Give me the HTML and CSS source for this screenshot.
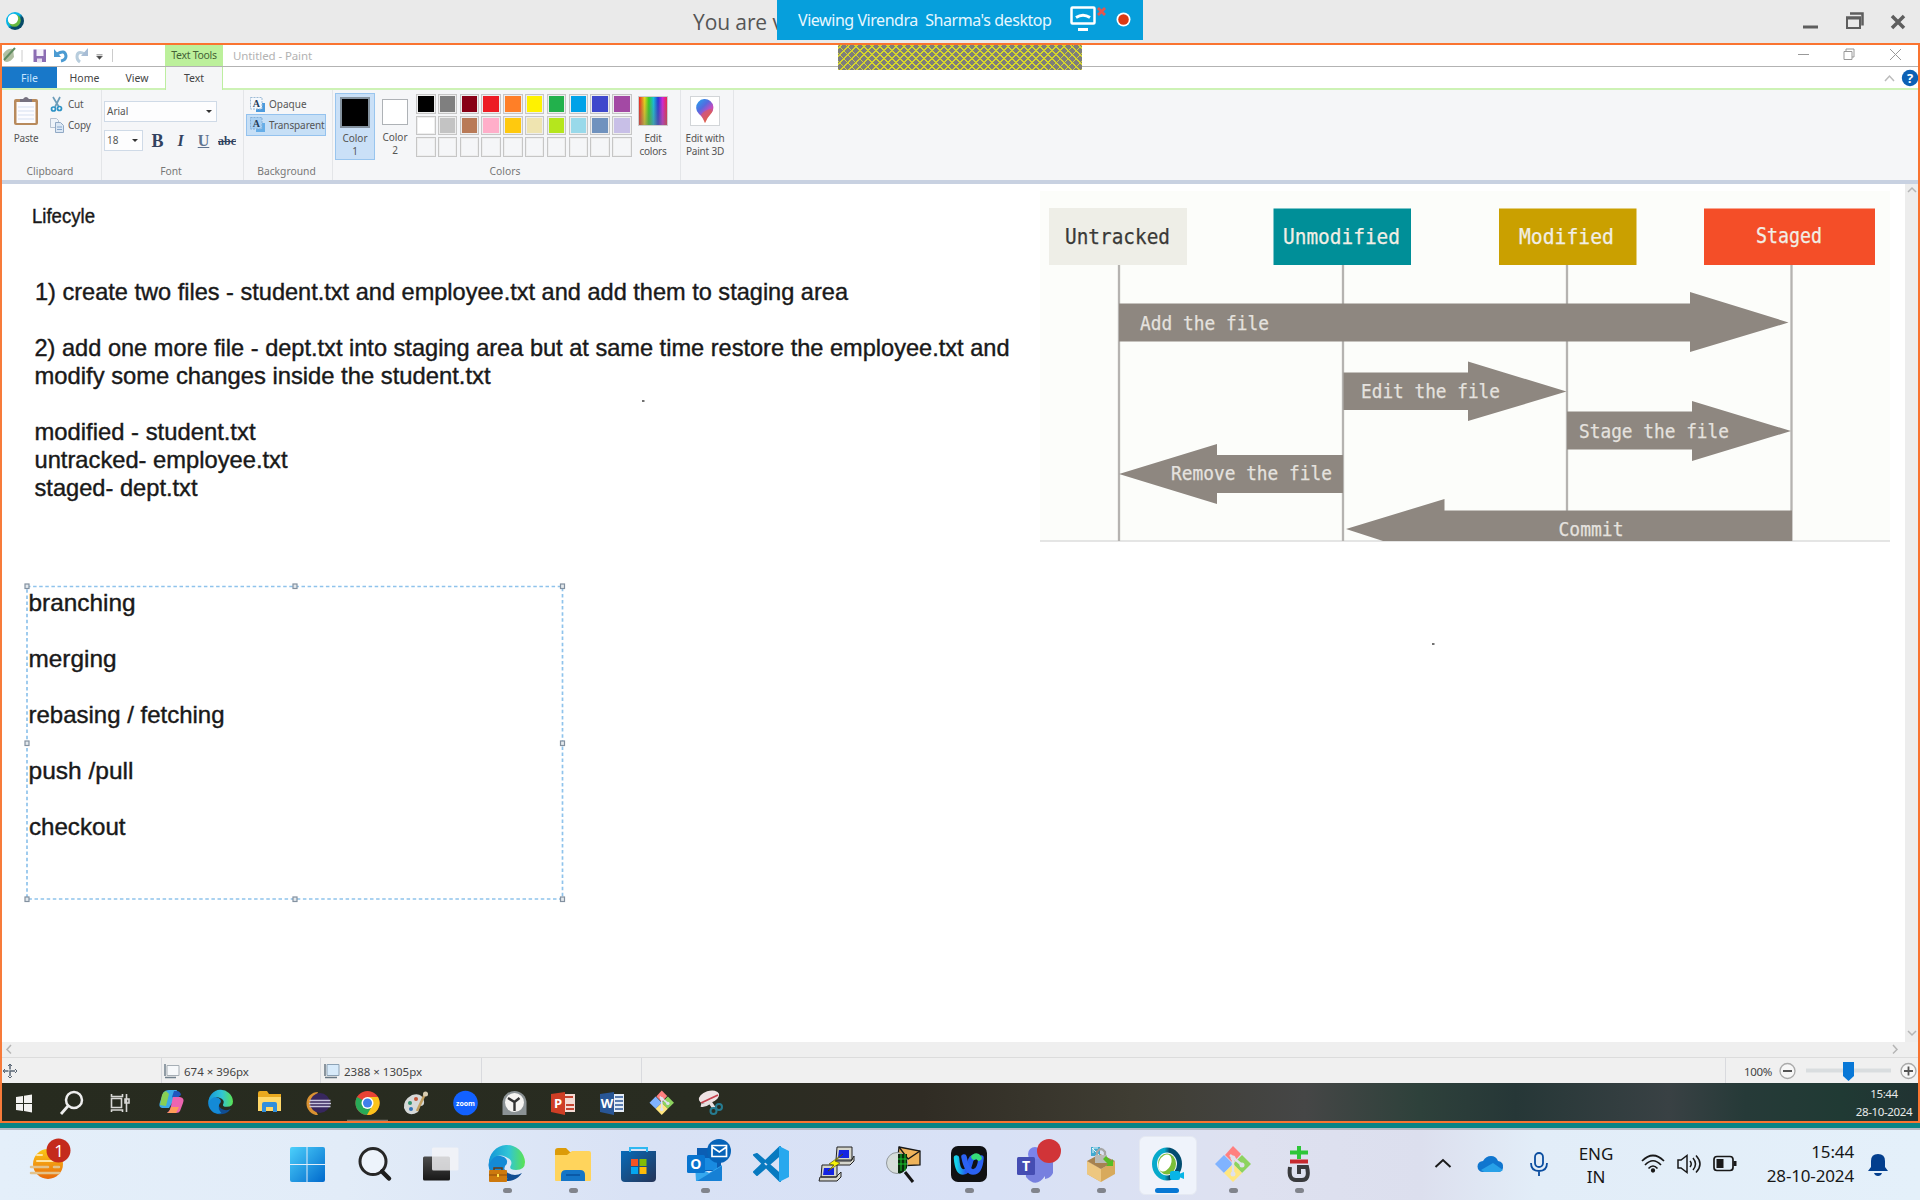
FILE: index.html
```html
<!DOCTYPE html>
<html lang="en">
<head>
<meta charset="utf-8">
<title>Shared desktop</title>
<link rel="stylesheet" href="styles.css">
</head>
<body>
<header class="meeting-bar">
  <svg class="meeting-logo" viewBox="0 0 20 20"><defs><linearGradient id="wx" x1="0" y1="0" x2="1" y2="1"><stop offset=".45" stop-color="#08b5e8"/><stop offset=".6" stop-color="#074a68"/></linearGradient></defs><circle cx="10" cy="10" r="9" fill="url(#wx)"/><circle cx="9.5" cy="9.5" r="6.3" fill="#67b93e"/><ellipse cx="8" cy="8" rx="5" ry="5.4" fill="#fff" transform="rotate(40 8 8)"/></svg>
  <span class="meeting-title">You are v</span>
  <svg class="meeting-controls" viewBox="0 0 120 43"><g fill="none" stroke="#5e5e5e"><path d="M3 27h15" stroke-width="3"/><path d="M47 17.500h13v10.500h-13z" stroke-width="2"/><path d="M46 18h15" stroke-width="3"/><path d="M50 13.500h12.500v12" stroke-width="2.500"/><path d="M92 16l12 12M104 16l-12 12" stroke-width="3.500"/></g></svg>
  <div class="banner"><span class="banner-text">Viewing Virendra&nbsp; Sharma's desktop</span>
    <svg class="banner-icons" viewBox="0 0 90 40"><rect x="11.500" y="7.500" width="23" height="16" rx="1" fill="none" stroke="#fff" stroke-width="2.500"/><path d="M16 17.500q7-4.500 14 0" fill="none" stroke="#fff" stroke-width="3"/><path d="M18 29.500h10" stroke="#fff" stroke-width="3"/><path d="M38 8l7 7M45 8l-7 7" stroke="#e5564c" stroke-width="2.800"/><circle cx="63.500" cy="19.500" r="7" fill="#fff"/><circle cx="63.500" cy="19.500" r="5.300" fill="#dc3912"/></svg>
  </div>
</header>

<main class="share">
  <div class="hatch"></div>
  <div class="titlebar">
    <svg class="quick" viewBox="2 45 163 21"><path d="M3 54q4-6 10-5l1 8q-5 7-10 4z" fill="#b0bfa2"/><path d="M4 60L15 48" stroke="#5f8b60" stroke-width="2"/><path d="M22 50v12M112.500 49v13" stroke="#ccc"/><path d="M33.500 49.500h12.500v12.500h-12.500z" fill="#8c6db3"/><path d="M36.500 49h7v7h-7z" fill="#f5f1fa"/><path d="M37 58.500h5v4h-5z" fill="#e5ddef"/><path d="M57 54q8-5 9 2q0 4-5 5" fill="none" stroke="#4b9bd2" stroke-width="3"/><path d="M54 49v8h7z" fill="#4b9bd2"/><path d="M85 54q-8-4-8 3q0 3 3 5" fill="none" stroke="#b8cddd" stroke-width="3"/><path d="M88 48v8h-7z" fill="#a8bdd5"/><path d="M96.500 54.500h6M96.500 56h6l-3 3.500z" fill="#444" stroke="#777" stroke-width=".6"/></svg>
    <span class="context-tab">Text Tools</span>
    <span class="doc-title">Untitled - Paint</span>
    <svg class="inner-controls" viewBox="1790 45 128 21" fill="none" stroke="#999"><path d="M1798 54.500h11M1844 51.500h8v8h-8zM1846 51v-2h8v8h-2M1890 49l11 11M1901 49l-11 11"/></svg>
  </div>
  <nav class="tabs">
    <span class="tab tab-file">File</span><span class="tab tab-home">Home</span><span class="tab tab-view">View</span><span class="tab tab-text">Text</span>
    <svg class="tab-tools" viewBox="1878 67 40 22"><path d="M1885 81l4.500-5 4.500 5" fill="none" stroke="#bbb" stroke-width="1.500"/><circle cx="1910" cy="78" r="8.200" fill="#0c61b5"/><text x="1910" y="82.500" text-anchor="middle" class="help">?</text></svg>
  </nav>

  <section class="ribbon">
    <div class="group g-clip">
      <div class="tools">
        <div class="big paste"><svg viewBox="0 0 26 30"><rect x="1" y="3" width="24" height="26" rx="2" fill="#b88a5c"/><rect x="3.500" y="6" width="19" height="21" fill="#fcfcff"/><path d="M5 11h16M5 15h16M5 19h16M5 23h16" stroke="#d5dff0"/><path d="M7 6V3h3q3-4 6 0h3v3z" fill="#76717f"/></svg><span>Paste</span></div>
        <div class="stack">
          <div class="row"><svg viewBox="0 0 14 16"><path d="M3 1l6 10M10 1L5 11" stroke="#6d9db9" stroke-width="1.700"/><circle cx="3.500" cy="13" r="2" fill="none" stroke="#2e93c6" stroke-width="1.700"/><circle cx="9.500" cy="12.500" r="2" fill="none" stroke="#2e93c6" stroke-width="1.700"/></svg><span>Cut</span></div>
          <div class="row"><svg viewBox="0 0 14 16"><path d="M.500 1.500h6l2 2v7h-8z" fill="#eef3f9" stroke="#b4c1d1"/><path d="M5.500 5.500h5l3 3v7h-8z" fill="#dbe7f4" stroke="#91a9c5"/><path d="M7 10h5M7 12.500h5" stroke="#86a6cd"/></svg><span>Copy</span></div>
        </div>
      </div>
      <span class="label">Clipboard</span>
    </div>
    <div class="group g-font">
      <div class="tools font-tools">
        <div class="combo family"><span>Arial</span><i></i></div>
        <div class="font-row"><div class="combo size"><span>18</span><i></i></div><b class="fb">B</b><em class="fi">I</em><u class="fu">U</u><s class="fs">abc</s></div>
      </div>
      <span class="label">Font</span>
    </div>
    <div class="group g-back">
      <div class="tools back-tools">
        <div class="row"><svg viewBox="0 0 16 16"><path d="M6 6h9v9H6z" fill="#4d9bdd"/><path d="M.500.500h11.500v11.500H.500z" fill="#f5f9fd" stroke="#9dbbd6" stroke-dasharray="2 1"/><text x="6.300" y="10" text-anchor="middle" class="tiny-a">A</text></svg><span>Opaque</span></div>
        <div class="row selected"><svg viewBox="0 0 16 16"><path d="M6 6h9v9H6z" fill="#66aee8"/><path d="M.500.500h11.500v11.500H.500z" fill="#a9d0f2" stroke="#83afd8" stroke-dasharray="2 1"/><text x="6.300" y="10" text-anchor="middle" class="tiny-a">A</text></svg><span>Transparent</span></div>
      </div>
      <span class="label">Background</span>
    </div>
    <div class="group g-colors">
      <div class="tools color-tools">
        <div class="pick active"><i class="swatch black"></i><span>Color<br>1</span></div>
        <div class="pick"><i class="swatch white"></i><span>Color<br>2</span></div>
        <div class="palette">
          <i class="c-black"></i><i class="c-gray"></i><i class="c-maroon"></i><i class="c-red"></i><i class="c-orange"></i><i class="c-yellow"></i><i class="c-green"></i><i class="c-sky"></i><i class="c-indigo"></i><i class="c-purple"></i>
          <i class="c-white"></i><i class="c-silver"></i><i class="c-brown"></i><i class="c-rose"></i><i class="c-gold"></i><i class="c-cream"></i><i class="c-lime"></i><i class="c-aqua"></i><i class="c-steel"></i><i class="c-lav"></i>
          <i></i><i></i><i></i><i></i><i></i><i></i><i></i><i></i><i></i><i></i>
        </div>
        <div class="big edit"><div class="rainbow"></div><span>Edit<br>colors</span></div>
      </div>
      <span class="label">Colors</span>
    </div>
    <div class="group g-3d">
      <div class="big three"><svg viewBox="0 0 30 30"><defs><linearGradient id="drop" x1="0" y1="0" x2=".7" y2="1"><stop offset="0" stop-color="#21a9ef"/><stop offset=".4" stop-color="#546bdf"/><stop offset=".65" stop-color="#c24cc1"/><stop offset="1" stop-color="#e2672e"/></linearGradient></defs><rect x=".5" y=".5" width="29" height="29" fill="#fff" stroke="#d2d5d8"/><path d="M15 27q-2-6-6-9a8.600 8.600 0 1 1 12.500-1q-4 4-6.500 10z" fill="url(#drop)"/><path d="M11 19q3-5 10-6l1 3q-5 6-7 11z" fill="#e2603f" opacity=".55"/></svg><span>Edit with<br>Paint 3D</span></div>
    </div>
  </section>

  <div class="workspace">
    <svg class="canvas" viewBox="2 184 1903 858">
      <g class="note">
        <text x="32" y="222.500" textLength="63" lengthAdjust="spacingAndGlyphs" class="note-small">Lifecyle</text>
        <text x="35" y="299.500" textLength="813" lengthAdjust="spacingAndGlyphs">1) create two files - student.txt and employee.txt and add them to staging area</text>
        <text x="34.500" y="355.800" textLength="975" lengthAdjust="spacingAndGlyphs">2) add one more file - dept.txt into staging area but at same time restore the employee.txt and</text>
        <text x="34.500" y="383.800" textLength="456" lengthAdjust="spacingAndGlyphs">modify some changes inside the student.txt</text>
        <text x="34.500" y="439.500" textLength="221" lengthAdjust="spacingAndGlyphs">modified - student.txt</text>
        <text x="34.500" y="467.500" textLength="253" lengthAdjust="spacingAndGlyphs">untracked- employee.txt</text>
        <text x="34.500" y="495.500" textLength="163" lengthAdjust="spacingAndGlyphs">staged- dept.txt</text>
        <text x="28.500" y="611" textLength="107" lengthAdjust="spacingAndGlyphs">branching</text>
        <text x="28.500" y="667" textLength="88" lengthAdjust="spacingAndGlyphs">merging</text>
        <text x="28.500" y="723" textLength="196" lengthAdjust="spacingAndGlyphs">rebasing / fetching</text>
        <text x="28.500" y="779" textLength="105" lengthAdjust="spacingAndGlyphs">push /pull</text>
        <text x="29" y="835" textLength="96.500" lengthAdjust="spacingAndGlyphs">checkout</text>
      </g>
      <path d="M642 401h2.500M1432 644h2.500" stroke="#444" stroke-width="1.600"/>
      <path d="M27 586.500H562.500V899H27z" fill="none" stroke="#8fc3ec" stroke-width="1.700" stroke-dasharray="3.500 2.600"/>
      <g fill="#e4e9ed" stroke="#8391a0" stroke-width="1.200"><rect x="25" y="584" width="4" height="4.500"/><rect x="293" y="584" width="4" height="4.500"/><rect x="560.500" y="584" width="4" height="4.500"/><rect x="25" y="741" width="4" height="4.500"/><rect x="560.500" y="741" width="4" height="4.500"/><rect x="25" y="897" width="4" height="4.500"/><rect x="293" y="897" width="4" height="4.500"/><rect x="560.500" y="897" width="4" height="4.500"/></g>
      <rect x="1040" y="191" width="850" height="350" fill="#fcfdfa"/><path d="M1040 541h850" stroke="#dcdcdc" stroke-width="1.500"/>
      <path d="M1119 265v276M1343 265v276M1567 265v276M1791.500 265v276" stroke="#b5b3b0" stroke-width="2.300"/>
      <rect x="1049" y="208" width="138" height="57" fill="#eeeee7"/><rect x="1273.500" y="208.500" width="137.500" height="56.500" fill="#008f98"/><rect x="1499" y="208.500" width="137.500" height="56.500" fill="#caa000"/><rect x="1704" y="208.500" width="171" height="56.500" fill="#f44e28"/>
      <g fill="#8e8780"><path d="M1119 303.500H1690V292l98.500 30.500L1690 352v-10.500H1119z"/><path d="M1343.500 372.500H1468V361.500l98.500 30L1468 421v-11H1343.500z"/><path d="M1567 411.500H1692V401l99 30L1692 461v-11.500H1567z"/><path d="M1343 455H1217V444l-98 30 98 30v-11h126z"/><path d="M1792 510.500H1444.500V499l-98.500 30 37 12h409z"/></g>
      <g class="mono">
        <text x="1065" y="244" textLength="105" lengthAdjust="spacingAndGlyphs" class="dark">Untracked</text>
        <text x="1283" y="244" textLength="117" lengthAdjust="spacingAndGlyphs">Unmodified</text>
        <text x="1519" y="244" textLength="95" lengthAdjust="spacingAndGlyphs">Modified</text>
        <text x="1756" y="243" textLength="66" lengthAdjust="spacingAndGlyphs">Staged</text>
        <g class="soft"><text x="1140" y="329.500" textLength="129" lengthAdjust="spacingAndGlyphs">Add the file</text>
        <text x="1361" y="398" textLength="139" lengthAdjust="spacingAndGlyphs">Edit the file</text>
        <text x="1579" y="438" textLength="150" lengthAdjust="spacingAndGlyphs">Stage the file</text>
        <text x="1171" y="480" textLength="161" lengthAdjust="spacingAndGlyphs">Remove the file</text>
        <text x="1558.500" y="536" textLength="65" lengthAdjust="spacingAndGlyphs">Commit</text></g>
      </g>
    </svg>
    <svg class="vscroll" viewBox="0 0 13 858" fill="none" stroke="#b5b5b5" stroke-width="1.500"><path d="M3 8l4-4 4 4M3 847l4 4 4-4"/></svg>
  </div>
  <div class="hscroll"><svg viewBox="2 1042 1916 15" fill="none" stroke="#b5b5b5" stroke-width="1.500"><path d="M11 1045l-4 4.500 4 4M1893 1045l4 4.500-4 4"/></svg></div>
  <footer class="status">
    <span class="st st-pos"><svg viewBox="0 0 16 16"><path d="M8 1v14M1 8h14" stroke="#596574" stroke-width="1.500" stroke-dasharray="5.500 1"/><path d="M6 3l2-2 2 2M6 13l2 2 2-2M3 6L1 8l2 2M13 6l2 2-2 2" fill="none" stroke="#596574"/></svg></span>
    <span class="st st-sel"><svg viewBox="0 0 16 16"><path d="M3 2.500h12v10H3z" fill="#f6f8fa" stroke="#a6aeb5"/><path d="M1 1v12M1 14.500h11" stroke="#71808c" stroke-width="1.500"/></svg>674 × 396px</span>
    <span class="st st-dim"><svg viewBox="0 0 16 16"><path d="M3 1.500h12v11H3z" fill="#d7eafa" stroke="#8da2b5"/><path d="M1 1v12M1 14.500h12" stroke="#687783" stroke-width="1.500"/></svg>2388 × 1305px</span>
    <span class="st st-a"></span><span class="st st-b"></span>
    <span class="st st-zoom"><span class="zoom-value">100%</span><svg viewBox="1775 1058 143 25"><g fill="#f7f7f7" stroke="#aaa" stroke-width="1.300"><circle cx="1787.500" cy="1071" r="7.500"/><circle cx="1908.500" cy="1071" r="7.500"/></g><path d="M1783 1071h9M1904 1071h9M1908.500 1066.500v9" stroke="#555" stroke-width="1.800"/><path d="M1806 1070.500h85" stroke="#d9dddf" stroke-width="4"/><path d="M1843 1062h11v14l-5.500 5-5.500-5z" fill="#0878d7"/></svg></span>
  </footer>

  <div class="remote-bar">
    <div class="remote-icons">
      <svg viewBox="0 0 49 38"><path d="M16 14l7-1v7h-7zM24 12.800l8-1.300V20h-8zM16 21h7v7l-7-1zM24 21h8v8.500l-8-1.500z" fill="#f2f2f0"/></svg>
      <svg viewBox="0 0 49 38"><circle cx="25" cy="17" r="8" fill="none" stroke="#eee" stroke-width="2.500"/><path d="M19 23l-7 8" stroke="#eee" stroke-width="2.800"/></svg>
      <svg viewBox="1.500 0 49 38" fill="none" stroke="#d8d8d5" stroke-width="1.600"><path d="M15 15.500h10v9H15zM15 11v2.500h11V11M15 29v-2h11v2M30 11v18M28.500 16h4v4h-4z"/></svg>
      <svg viewBox="0 0 49 38"><path d="M16 10q2-3 6-3h8l-3 10-5 8h-7q-4-1-2-6z" fill="#3ba9e7"/><path d="M15 12q1-3 4-4l3 3-3 12-6-1z" fill="#88cf54"/><path d="M27 8h3q3 0 4 4l-5 4-4-2z" fill="#2157bd"/><path d="M26 14h7q5 1 3 6l-3 8q-1 2-4 2h-9q3-2 4-7z" fill="#ec65b0"/><path d="M20 30q3-1 4-6h8l-3 6z" fill="#ff9c58"/></svg>
      <svg viewBox="0 0 49 38"><use href="#edge" transform="translate(12.500 7.500) scale(.68)"/></svg>
      <svg viewBox="0 0 49 38"><path d="M13 10q0-2 2-2h7l2 3h12v17H13z" fill="#e9a91f"/><path d="M13 14h23v14H13z" fill="#ffd869"/><path d="M17 29v-8q0-2 2-2h11q2 0 2 2v8h-4v-5h-7v5z" fill="#318fdc"/></svg>
      <svg viewBox="0 0 49 38"><path d="M24 9a10 10 0 0 0 0 23q-7-10 0-23" fill="#da9232"/><circle cx="26" cy="20" r="10" fill="#37275e"/><path d="M15.500 17.500h21M15 20.500h22M15.500 23.500h21" stroke="#c9c5df" stroke-width="1.700"/></svg>
      <svg viewBox="0 0 49 38"><circle cx="24.500" cy="20" r="12" fill="#e94335"/><path d="M14 14a12 12 0 0 0 10 18l6-9-5-3z" fill="#28a957"/><path d="M24 32a12 12 0 0 0 11-18H24l5 9z" fill="#fbc31c"/><circle cx="24.500" cy="20" r="6" fill="#fff"/><circle cx="24.500" cy="20" r="4.500" fill="#3f80eb"/><path d="M4 37.500h41" stroke="#74756d" stroke-width="1.500"/></svg>
      <svg viewBox="0 0 49 38"><path d="M12 25q-1-8 8-13 10-3 12 6 1 5-4 5l-2 6q-10 6-14-4z" fill="#d6d9d8"/><circle cx="18" cy="20" r="2" fill="#31936e"/><circle cx="24" cy="16" r="2" fill="#c35537"/><circle cx="19" cy="26" r="2" fill="#3574b8"/><path d="M25 28L33 11" stroke="#c2a061" stroke-width="2.500"/><circle cx="33.500" cy="11" r="2.500" fill="#d8ccb0"/></svg>
      <svg viewBox="0 0 49 38"><circle cx="24.500" cy="20" r="12.300" fill="#1261ff"/><text x="24.500" y="22.500" text-anchor="middle" class="zoomword">zoom</text></svg>
      <svg viewBox="0 0 49 38"><path d="M12.500 32V20a12 12 0 0 1 24 0v12z" fill="#8b9294"/><circle cx="24.500" cy="19.500" r="9.500" fill="#f5f4f1"/><path d="M18 15l6.500 4 5-4M24.500 19v9" stroke="#333" stroke-width="2.400" fill="none"/></svg>
      <svg viewBox="0 0 49 38"><path d="M25 11h11v18H25z" fill="#f4dbd4"/><path d="M26 14h8M27 22h8M27 26h8" stroke="#c44431" stroke-width="2"/><path d="M12 11l14-2v23l-14-3z" fill="#cf3e25"/><text x="19" y="25" text-anchor="middle" class="office">P</text></svg>
      <svg viewBox="0 0 49 38"><path d="M25 11h11v18H25z" fill="#e5edf8"/><path d="M27 14h8M27 18h8M27 22h8M27 26h8" stroke="#2d5797" stroke-width="1.500"/><path d="M12 11l14-2v23l-14-3z" fill="#285696"/><text x="19" y="25" text-anchor="middle" class="office">W</text></svg>
      <svg viewBox="0 0 49 38"><use href="#gitdiamond" transform="translate(12.500 7.500) scale(.68)"/></svg>
      <svg viewBox="0 0 49 38"><ellipse cx="23" cy="14" rx="10.500" ry="6" fill="#eee3e4" transform="rotate(-18 23 14)"/><path d="M15 20l17-8" stroke="#c6404d" stroke-width="1.800"/><path d="M15 22q4 1 9-3l4 6" stroke="#e7dfe0" stroke-width="3.500" fill="none"/><circle cx="27.500" cy="28" r="3" stroke="#267b91" stroke-width="2" fill="none"/><circle cx="33" cy="24" r="3" stroke="#267b91" stroke-width="2" fill="none"/></svg>
    </div>
    <div class="remote-clock">15:44<br>28-10-2024</div>
  </div>
</main>
<div class="desktop-edge"></div>

<footer class="taskbar">
  <div class="weather"><svg viewBox="0 0 50 70"><defs><linearGradient id="sun" x2="0" y2="1"><stop stop-color="#fbc715"/><stop offset="1" stop-color="#e8690c"/></linearGradient></defs><circle cx="24" cy="34" r="15" fill="url(#sun)"/><g stroke="#ffe3a0" stroke-width="2" stroke-linecap="round"><path d="M13 25h5M13 31h19" /><path d="M7 37h17M30 37h5M7 43h28" stroke="#e3c28b" stroke-width="2.500"/></g><circle cx="34.500" cy="20.500" r="12" fill="#c42b1c"/><text x="35" y="26.500" text-anchor="middle" class="badge">1</text></svg></div>
  <div class="apps">
    <div class="app"><svg viewBox="0 0 66 70"><defs><linearGradient id="win" x2="1" y2="1"><stop stop-color="#4cd0fb"/><stop offset="1" stop-color="#0069cc"/></linearGradient></defs><path fill="url(#win)" d="M14 19q0-2 2-2h14.500v17H14zM31.500 17H47q2 0 2 2v15H31.500zM14 35h16.500v17H16q-2 0-2-2zM31.500 35H49v15q0 2-2 2H31.500z"/></svg></div>
    <div class="app"><svg viewBox="0 0 66 70"><circle cx="31" cy="31.500" r="13" fill="#edf3fb" stroke="#272727" stroke-width="3"/><path d="M40 41.500l7 7" stroke="#1d1d1d" stroke-width="4.500" stroke-linecap="round"/></svg></div>
    <div class="app"><svg viewBox="0 0 66 70"><defs><linearGradient id="tv" x2="0" y2="1"><stop stop-color="#4d4d4d"/><stop offset="1" stop-color="#171717"/></linearGradient></defs><rect x="15" y="26.500" width="27" height="24" rx="1.500" fill="url(#tv)"/><rect x="24" y="17.500" width="26.500" height="23" rx="1.500" fill="#f4f4f6" opacity=".82"/></svg></div>
    <div class="app running"><svg viewBox="0 0 66 70"><defs><linearGradient id="ed" x2="1"><stop stop-color="#1496d8"/><stop offset=".55" stop-color="#31c5d5"/><stop offset="1" stop-color="#5be351"/></linearGradient></defs><g transform="translate(15 16)"><g id="edge"><path d="M0 18a18 18 0 0 0 33 9q-7 4-14 0-6-4-4-10z" fill="#104d92"/><path d="M2 10Q8 8 15 11q6 4 1 9-3 7 3 13-10 4-17-6-5-8 0-17z" fill="#148ad6"/><path d="M0 18A18 18 0 0 1 36 16q0 8-9 8-8 0-5-5 2-5-5-8Q6 6 0 18z" fill="url(#ed)"/></g></g><rect x="15" y="40" width="18" height="12" rx="1" fill="#cd790d"/><path d="M20 40v-2h8v2" stroke="#693a16" fill="none" stroke-width="1.500"/><path d="M15 45h18" stroke="#8d4d0b" stroke-width="1"/><rect x="23" y="44" width="2" height="3" fill="#ffe34a"/></svg></div>
    <div class="app running"><svg viewBox="0 0 66 70"><path d="M15 21q0-3 3-3h8l4 4h18v7H15z" fill="#dc9b08"/><path d="M15 25h12l5-4h17q2 0 2 2v27q0 1-1 1H16q-1 0-1-1z" fill="#ffd45c"/><path d="M21 51v-6q0-5 5-5h14q5 0 5 5v6z" fill="#1475c7"/><path d="M26 45h14" stroke="#07509c" stroke-width="1.500"/></svg></div>
    <div class="app"><svg viewBox="0 0 66 70"><defs><linearGradient id="st" x2="1" y2="1"><stop stop-color="#086bb9"/><stop offset="1" stop-color="#253457"/></linearGradient></defs><path d="M15 21h35v27q0 4-4 4H19q-4 0-4-4z" fill="url(#st)"/><path d="M24 22v-4h17v4" fill="none" stroke="#2fb8f1" stroke-width="2"/><path d="M25 29h7v7h-7z" fill="#f35325"/><path d="M33.500 29h7v7h-7z" fill="#81bc06"/><path d="M25 37h7v7h-7z" fill="#05a6f0"/><path d="M33.500 37h7v7h-7z" fill="#ffba08"/></svg></div>
    <div class="app running"><svg viewBox="0 0 66 70"><path d="M25 18h24v23H25z" fill="#0b5eb4"/><path d="M33 28h12v12H33z" fill="#198be1"/><path d="M23 35l14 8 13-8v16H24z" fill="#36a8ef"/><path d="M25 51l25-15v13q0 2-2 2z" fill="#1680d5"/><rect x="15" y="25" width="18" height="18" rx="1.500" fill="#0874cf"/><text x="23.800" y="39.300" text-anchor="middle" class="letter">O</text><circle cx="47" cy="21" r="12" fill="#0663b8"/><path d="M40 15.500h14.500v11H40z M40 17l7.300 5 7.200-5" fill="none" stroke="#fff" stroke-width="1.700"/></svg></div>
    <div class="app"><svg viewBox="0 0 66 70"><path d="M16 25l3-1 24 21-1 6zM16 42l3 3 24-21-1-7z" fill="#087ac0" stroke="#087ac0" stroke-width="2" stroke-linejoin="round"/><path d="M41 16l10 5v26l-10 5z" fill="#27a8ee"/></svg></div>
    <div class="app"><svg viewBox="0 0 66 70"><g stroke="#222" stroke-width="1"><path d="M33 17h15v13H32zM31 31h16l3-5v5l-4 4H31zM18 35h15v12H17zM16 47h16l5-5v5l-4 4H15z" fill="#d5d5cc"/></g><path d="M35 20h10v8H34zM20 38h10v7H19z" fill="#1423e2"/><path d="M39 24L25 34l5 1-6 6 12-8-5-2z" fill="#f7f409" stroke="#453f00" stroke-width=".6"/></svg></div>
    <div class="app"><svg viewBox="0 0 66 70"><path d="M29 17l21 4v14l-23 1z" fill="#efb35a" stroke="#171717" stroke-width="1.300"/><path d="M29 17l9 12 12-8" fill="none" stroke="#171717" stroke-width="1.300"/><circle cx="27" cy="33" r="10.500" fill="#d7dddb" stroke="#92999c"/><path d="M28 24h9v14q-5 7-9 5z" fill="#092b0b"/><path d="M28 29h9M28 34h9M31 24v17M35 24v17" stroke="#19c42d"/><path d="M35 42l8 10" stroke="#151515" stroke-width="3"/></svg></div>
    <div class="app running"><svg viewBox="0 0 66 70"><defs><linearGradient id="wl" x2="1" y2="0"><stop stop-color="#15d3e8"/><stop offset=".5" stop-color="#245cf0"/><stop offset="1" stop-color="#245cf0"/></linearGradient></defs><rect x="15" y="16" width="36" height="36" rx="7" fill="#101113"/><g fill="none" stroke-width="5.500" stroke-linecap="round"><path d="M20.500 28q1 14 6.500 14 5 0 7-9 1-6 5-6" stroke="url(#wl)"/><path d="M28 27q3 15 9 15 7 0 8-14" stroke="#2b62f4"/><path d="M38 27q3-2 5 1" stroke="#36dc79"/></g></svg></div>
    <div class="app running"><svg viewBox="0 0 66 70"><circle cx="33" cy="24" r="7" fill="#7b83eb"/><path d="M23 29h20v17q-9 13-19 1zM43 30h8v13q-2 5-8 6z" fill="#7780df"/><rect x="15" y="27" width="18" height="18" rx="1.500" fill="#454db3"/><text x="24" y="41" text-anchor="middle" class="letter">T</text><circle cx="47" cy="21" r="12" fill="#d13438"/></svg></div>
    <div class="app running"><svg viewBox="0 0 66 70"><path d="M19 31l14 8 14-8v13l-14 8-14-8z" fill="#d8aa5c"/><path d="M19 31l14 8v13l-14-8z" fill="#edc780"/><path d="M19 31l13-7 15 7-14 8z" fill="#a68250"/><path d="M23 17h9v9h-9z" fill="#41aad0"/><path d="M24 18l7 7M25 18v5M25 18h5" stroke="#e9f7fb"/><path d="M29 26v-4q4-6 8 0v4" fill="none" stroke="#a6a6a6" stroke-width="2.300"/><path d="M27 25h12v8H27z" fill="#b9bab5"/><path d="M35 29l5 5-2 2h7v-7l-2 2-5-5z" fill="#55bd26"/></svg></div>
    <div class="app focused"><svg viewBox="0 0 66 70"><defs><linearGradient id="wq" x2="1"><stop offset=".4" stop-color="#07aacb"/><stop offset=".6" stop-color="#034d70"/></linearGradient></defs><ellipse cx="33" cy="34" rx="12.500" ry="14" fill="#f2f6fd" stroke="url(#wq)" stroke-width="5"/><ellipse cx="33" cy="34" rx="9" ry="10.500" fill="#7bbe38"/><ellipse cx="31" cy="33" rx="6" ry="9" fill="#fff" transform="rotate(25 31 33)"/><rect x="36" y="41" width="10" height="9" rx="2" fill="#08b5e6"/><path d="M45 44l5-2v7l-5-2z" fill="#08b5e6"/></svg></div>
    <div class="app running"><svg viewBox="0 0 66 70"><g transform="translate(15 16)"><g id="gitdiamond"><path d="M18 0l8 8-8 9-8-8z" fill="#ff8080"/><path d="M9 9l9 9-9 9-9-9z" fill="#80b3ff"/><path d="M27 9l9 9-9 9-9-9z" fill="#8dd35f"/><path d="M18 18l9 9-9 9-9-9z" fill="#ffe680"/><path d="M15 9l12 10M18 11v18" stroke="#dfe1ed" stroke-width="2.500"/><circle cx="18" cy="12" r="2.500" fill="#dfe1ed"/><circle cx="27" cy="19" r="2.500" fill="#dfe1ed"/><circle cx="18" cy="28" r="2.500" fill="#dfe1ed"/></g></g></svg></div>
    <div class="app running"><svg viewBox="0 0 66 70"><path d="M24 22.500h18M33 16v13" stroke="#2ec638" stroke-width="4"/><path d="M24 31.500h18" stroke="#c6282e" stroke-width="4"/><path d="M24 37q-2 13 6 13h6q8 0 5-13h-8v7" stroke="#393a3d" stroke-width="4" fill="none"/></svg></div>
  </div>
  <div class="tray">
    <svg class="tray-icons" viewBox="1430 1130 125 70"><path d="M1435.500 1167l7.500-7 7.500 7" fill="none" stroke="#1b1b1b" stroke-width="2"/><path d="M1483 1172a5 5 0 0 1 0-11q3-5 8-5 5 0 7 5 6 1 5 7-1 4-5 4z" fill="#1076cf"/><path d="M1481 1170l12-7 10 7q-2 2-5 2h-14z" fill="#28a1e8"/><g fill="none" stroke="#0a4d9f" stroke-width="1.800"><rect x="1535" y="1153" width="8" height="14" rx="4"/><path d="M1531 1163q0 8 8 8t8-8M1539 1171v5"/></g></svg>
    <div class="lang">ENG<br>IN</div>
    <svg class="net" viewBox="1630 1130 115 70" fill="none" stroke="#191919" stroke-width="1.700"><path d="M1642 1161q11-11 22 0M1645 1165q8-8.500 16 0M1648.500 1168.500q4.500-5 9 0"/><circle cx="1653" cy="1170.500" r="1.300" fill="#191919"/><path d="M1678 1160h3l6-4.500v17l-6-4.500h-3zM1690 1161q2.500 3 0 6M1693 1158q5 6 0 12M1696 1155.500q8 8.500 0 17" stroke-width="1.500"/><rect x="1714" y="1156.500" width="19" height="14" rx="3"/><path d="M1716.500 1159h7v9h-7z" fill="#191919" stroke="none"/><path d="M1735 1161v5" stroke-width="3"/></svg>
    <div class="clock">15:44<br>28-10-2024</div>
    <svg class="bell" viewBox="0 0 24 24"><path d="M2 18l3-4V8q0-7 7-7t7 7v6l3 4z" fill="#033f8e"/><path d="M8 20h8q-1 3-4 3t-4-3z" fill="#033f8e"/></svg>
  </div>
</footer>
</body>
</html>
```
FILE: styles.css
```css
* { box-sizing: border-box; }
html, body { margin: 0; width: 1920px; height: 1200px; overflow: hidden; }
body { display: flex; flex-direction: column; background: #fff; font-family: "Noto Sans", "Open Sans", sans-serif; color: #444; }
svg { display: block; flex: none; }
i { font-style: normal; }

.meeting-bar { position: relative; height: 43px; flex: none; display: flex; background: #eaeaea; }
.meeting-logo { width: 20px; height: 20px; margin: 11px 0 0 5px; }
.meeting-title { margin: 6px auto 0 668px; font: 21px/32px "Open Sans", sans-serif; letter-spacing: -.1px; color: #555; }
.meeting-controls { width: 120px; height: 43px; }
.banner { position: absolute; left: 777px; top: 0; width: 366px; height: 40px; background: #069fdc; display: flex; align-items: center; padding-left: 21px; z-index: 3; }
.banner-text { width: 255px; flex: none; font-size: 16px; letter-spacing: -.45px; color: #e6f7ff; white-space: nowrap; }
.banner-icons { width: 90px; height: 40px; margin-left: 7px; }

.share { position: relative; height: 1080px; flex: none; border: 2px solid #fa7430; border-left-color: #f77b3a; display: flex; flex-direction: column; overflow: hidden; }
.hatch { position: absolute; left: 836px; top: -1px; width: 244px; height: 26px; background-color: #7e7e79; background-image: repeating-linear-gradient(45deg, #d5d52c 0 1.4px, transparent 1.4px 5.66px), repeating-linear-gradient(-45deg, #d5d52c 0 1.4px, transparent 1.4px 5.66px); }
.titlebar { height: 22px; flex: none; display: flex; border-bottom: 1px solid #b3b3b3; background: #fff; }
.quick { width: 163px; height: 21px; }
.context-tab { width: 58px; background: #bcf09b; text-align: center; font-size: 10.5px; line-height: 20px; color: #456236; white-space: nowrap; letter-spacing: -.3px; }
.doc-title { margin: 0 auto 0 10px; font-size: 11.5px; line-height: 21px; color: #b2b2b2; letter-spacing: -.1px; }
.inner-controls { width: 128px; height: 21px; }
.tabs { height: 23px; flex: none; display: flex; border-bottom: 2px solid #cdf2b5; font-size: 10.5px; line-height: 23px; text-align: center; background: #fff; }
.tab { flex: none; }
.tab-file { width: 55px; background: #1878c9; color: #c7e5ff; }
.tab-home { width: 55px; }
.tab-view { width: 53px; padding-right: 3px; }
.tab-text { width: 58px; height: 23px; border: solid #bdeea0; border-width: 0 1px; background: #f5f6f7; }
.tab-tools { width: 40px; height: 22px; margin-left: auto; }
.help { font: bold 13px "Open Sans", sans-serif; fill: #fff; }

.ribbon { height: 94px; flex: none; display: flex; background: #f5f6f8; border-bottom: 4px solid #c8d1e1; font-size: 10px; line-height: 13px; color: #555; }
.group { display: flex; flex-direction: column; height: 90px; border-right: 1px solid #e3e5e8; flex: none; }
.tools { height: 74px; display: flex; }
.label { text-align: center; line-height: 15px; font-size: 10.3px; color: #777; padding-right: 3px; }
.g-clip { width: 100px; } .g-font { width: 142px; } .g-back { width: 89px; } .g-colors { width: 348px; } .g-3d { width: 53px; }
.big { display: flex; flex-direction: column; align-items: center; text-align: center; white-space: nowrap; letter-spacing: -.2px; }
.paste { width: 48px; padding-top: 6px; }
.paste svg { width: 26px; height: 30px; margin-bottom: 6px; }
.stack { display: flex; flex-direction: column; padding-top: 6px; gap: 5px; }
.row { display: flex; align-items: center; height: 16px; gap: 4px; white-space: nowrap; letter-spacing: -.2px; }
.row svg { width: 14px; height: 16px; }
.font-tools { flex-direction: column; padding: 11px 0 0 2px; gap: 8px; }
.combo { height: 21px; display: flex; justify-content: space-between; align-items: center; border: 1px solid #cfdae7; background: #fdfdfe; padding: 0 4px 0 2px; }
.combo i { border: 3px solid transparent; border-top-color: #333; border-bottom: 0; }
.family { width: 113px; } .size { width: 39px; }
.font-row { display: flex; align-items: center; font: 16px/20px "Liberation Serif", serif; color: #31425f; }
.font-row .size { font: 10px/13px "Noto Sans", sans-serif; color: #555; }
.fb { width: 29px; text-align: center; font-size: 18px; } .fi { width: 17px; text-align: center; font-weight: bold; } .fu { width: 29px; text-align: center; color: #60738f; font-weight: bold; } .fs { width: 22px; font-size: 12px; font-weight: bold; }
.back-tools { flex-direction: column; padding: 6px 0 0 2px; gap: 1px; }
.back-tools .row { height: 17px; width: 80px; padding-left: 4px; gap: 3px; letter-spacing: 0; }
.back-tools .row svg { width: 16px; }
.back-tools .row.selected { height: 22px; background: #c6dff6; border: 1px solid #94c2ee; padding-left: 3px; letter-spacing: -.1px; }
.tiny-a { font: bold 10px "Liberation Serif", serif; fill: #263e5b; }
.color-tools { padding: 3px 0 0 2px; align-items: flex-start; }
.pick { width: 40px; height: 67px; text-align: center; display: flex; flex-direction: column; align-items: center; padding-top: 3px; }
.pick.active { background: #cae0f7; border: 1px solid #99c5ee; }
.swatch { display: block; width: 30px; height: 31px; margin-bottom: 4px; border: 2px solid #83919e; }
.swatch.black { background: #000; }
.swatch.white { width: 26px; height: 26px; margin: 3px 0 6px; border: 1px solid #aeb2b6; background: #fff; }
.palette { display: grid; grid-template-columns: repeat(10, 19.5px); grid-auto-rows: 19.5px; column-gap: 2.3px; row-gap: 2.1px; margin: 1px 0 0 1px; width: 218px; }
.palette i { border: 1px solid #c6c6c6; box-shadow: inset 0 0 0 1px #eeeeee; background: #f5f6f8; }
.palette .c-black { background: #000; } .palette .c-gray { background: #7f7f7f; } .palette .c-maroon { background: #880015; } .palette .c-red { background: #ed1c24; } .palette .c-orange { background: #ff7f27; } .palette .c-yellow { background: #fff200; } .palette .c-green { background: #22b14c; } .palette .c-sky { background: #00a2e8; } .palette .c-indigo { background: #3f48cc; } .palette .c-purple { background: #a349a4; }
.palette .c-white { background: #fff; } .palette .c-silver { background: #c3c3c3; } .palette .c-brown { background: #b97a57; } .palette .c-rose { background: #ffaec9; } .palette .c-gold { background: #ffc90e; } .palette .c-cream { background: #efe4b0; } .palette .c-lime { background: #b5e61d; } .palette .c-aqua { background: #99d9ea; } .palette .c-steel { background: #7092be; } .palette .c-lav { background: #c8bfe7; }
.edit { width: 38px; padding-top: 3px; }
.rainbow { width: 30px; height: 30px; margin-bottom: 6px; border: 1px solid #ccc; background: linear-gradient(transparent, #7777), linear-gradient(90deg, #f02020, #e7d719 20%, #35ce22 35%, #13bfdc 52%, #2435d8 68%, #d423d7 84%, #ee2846); }
.three { padding: 6px 4px 0 0; }
.three svg { width: 30px; height: 30px; margin-bottom: 6px; }

.workspace { height: 858px; flex: none; display: flex; }
.canvas { width: 1903px; height: 858px; background: #fff; }
.note { font: 24px "Liberation Sans", Arial, sans-serif; fill: #191919; stroke: #191919; stroke-width: .4px; }
.note-small { font-size: 20px; }
.mono { font: 20.5px "DejaVu Sans Mono", monospace; fill: #f1eee5; stroke: #f1eee5; stroke-width: .25px; }
.dark { fill: #3a3a37; stroke: #3a3a37; }
.soft { font-size: 19.5px; fill: #e5e2df; stroke: #e5e2df; }
.vscroll { width: 13px; height: 858px; background: #ededed; }
.hscroll { height: 16px; flex: none; background: #efefef; border-bottom: 1px solid #dcdcdc; }
.hscroll svg { width: 1916px; height: 15px; }
.status { height: 25px; flex: none; display: flex; background: #f0f0f0; font-size: 11.5px; color: #444; }
.st { display: flex; align-items: center; border-right: 1px solid #d9dade; flex: none; height: 25px; padding-top: 1px; }
.st > svg { width: 16px; height: 16px; margin-right: 4px; }
.st-pos { width: 160px; } .st-sel { width: 159px; padding-left: 2px; } .st-dim { width: 161px; padding-left: 3px; } .st-a { width: 160px; } .st-b { width: 1084px; }
.st-zoom { width: 192px; border: 0; padding: 0; }
.zoom-value { width: 49px; padding: 1px 0 0 18px; letter-spacing: -.3px; }
.st-zoom > svg { width: 143px; height: 25px; margin: 0; }

.remote-bar { flex: 1; display: flex; justify-content: space-between; background: linear-gradient(90deg, #272b1f 0, #292c21 37%, #302c24 48%, #3f3d33 59%, #454646 68%, #2e413b 74%, #263737 79%, #394144 87%, #263a38 91%, #203a34 96%, #213332 100%); }
.remote-icons { display: flex; margin-left: -2px; }
.remote-icons svg { width: 49px; height: 38px; }
.remote-clock { width: 66px; font-size: 11.5px; line-height: 18px; text-align: center; letter-spacing: -.35px; color: #e8eaea; padding: 2px 2px 0 0; }
.zoomword { font: bold 7px "Open Sans", sans-serif; fill: #fff; }
.office { font: bold 13px "Open Sans", sans-serif; fill: #fff; }
.desktop-edge { height: 7px; flex: none; background: #088486; border-bottom: 2px solid #b4bac4; }

.taskbar { height: 70px; flex: none; display: flex; color: #171717; background: linear-gradient(90deg, #e4effa 0, #e2ecf8 18%, #d9e2f5 33%, #d8e1f6 52%, #dee1f0 65%, #dcdfee 74%, #e2edf8 80%, #e4f0fa 100%); }
.weather { width: 276px; padding-left: 24px; }
.weather svg { width: 50px; height: 70px; }
.badge { font: 17px "Open Sans", sans-serif; fill: #fff; }
.apps { display: flex; }
.app { position: relative; width: 66px; height: 70px; }
.app > svg { position: relative; width: 66px; height: 70px; }
.running::after { content: ""; position: absolute; left: 28.5px; top: 58px; width: 9px; height: 5px; border-radius: 3px; background: #81848c; }
.focused::before { content: ""; position: absolute; left: 5px; top: 6px; width: 56px; height: 57px; border: 1px solid #e5e9f2; border-radius: 6px; background: #eff3fb; }
.focused::after { content: ""; position: absolute; left: 21px; top: 58px; width: 24px; height: 5px; border-radius: 3px; background: #0878d4; }
.letter { font: bold 14px "Open Sans", sans-serif; fill: #fff; }
.tray { margin-left: auto; width: 490px; display: flex; }
.tray-icons { width: 125px; height: 70px; }
.lang { width: 75px; text-align: center; padding: 12px 0 0 7px; font: 17px/23px "Noto Sans", sans-serif; letter-spacing: -.1px; }
.net { width: 115px; height: 70px; }
.clock { width: 109px; text-align: right; font-size: 17px; line-height: 24px; padding-top: 10px; letter-spacing: -.15px; }
.bell { width: 24px; height: 24px; margin: 23px 0 0 12px; }
```
